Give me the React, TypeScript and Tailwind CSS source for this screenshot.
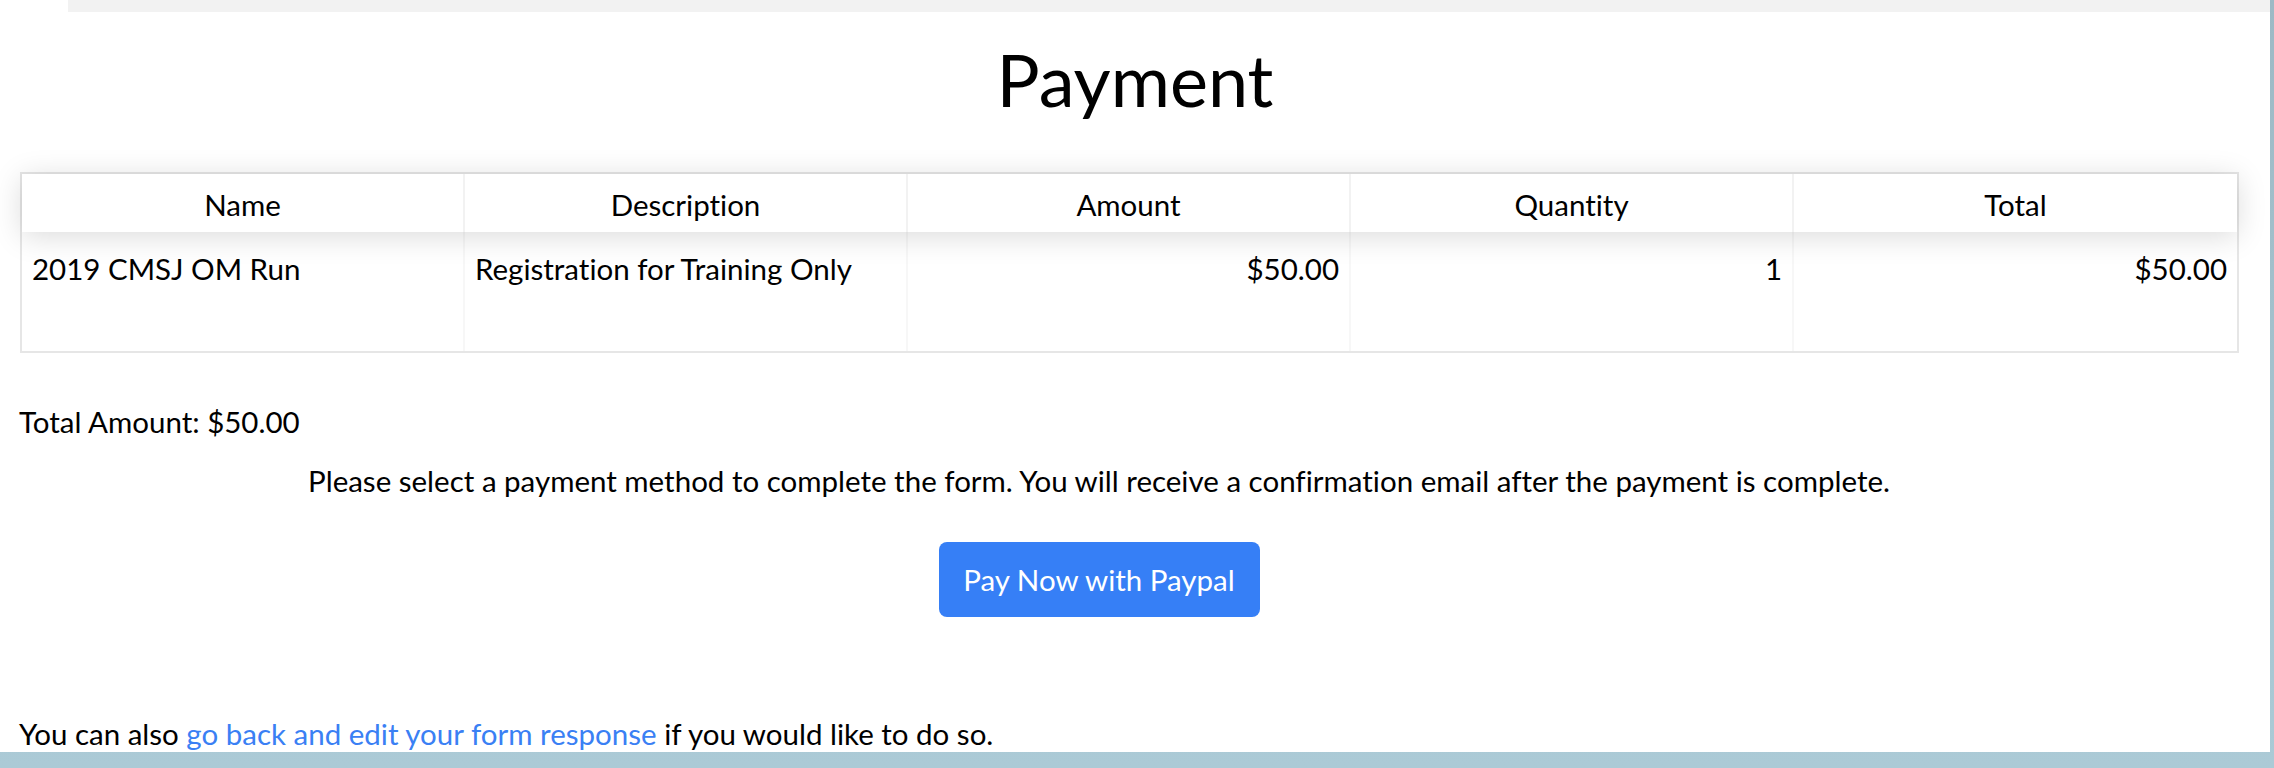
import React from "react";

const rows = [
  {
    name: "2019 CMSJ OM Run",
    description: "Registration for Training Only",
    amount: "$50.00",
    quantity: "1",
    total: "$50.00",
  },
];

const headers = ["Name", "Description", "Amount", "Quantity", "Total"];

export default function App() {
  return (
    <div className="w-[2274px] h-[768px] bg-linear-to-b from-[#9db9c5] to-[#abcad6] font-[Lato,sans-serif] text-black [font-variant-ligatures:none]">
      <div className="w-[2270px] h-[752px] bg-white overflow-hidden flex flex-col">
        {/* top strip */}
        <div className="ml-[68px] h-[12px] bg-[#f2f2f2] shrink-0" />

        <h1 className="mt-[24px] text-center text-[72px] leading-[1.2] font-normal">Payment</h1>

        {/* table */}
        <div className="mt-[50px] ml-[20px] w-[2219px] border-2 border-[#e6e6e6] text-[29.5px] leading-[1.2]">
          <div className="relative z-10 grid grid-cols-5 h-[58px] shadow-[0_4px_30px_0_rgba(0,0,0,0.15)]">
            {headers.map((h, i) => (
              <div
                key={h}
                className={`flex items-center justify-center pt-[2px] ${
                  i < headers.length - 1 ? "border-r-2 border-[#f2f2f2]" : ""
                }`}
              >
                {h}
              </div>
            ))}
          </div>
          {rows.map((r) => (
            <div key={r.name} className="grid grid-cols-5 h-[119px]">
              <div className="pt-[19px] px-[10px] border-r-2 border-[#f7f7f7]">{r.name}</div>
              <div className="pt-[19px] px-[10px] border-r-2 border-[#f7f7f7]">{r.description}</div>
              <div className="pt-[19px] px-[10px] border-r-2 border-[#f7f7f7] text-right">{r.amount}</div>
              <div className="pt-[19px] px-[10px] border-r-2 border-[#f7f7f7] text-right">{r.quantity}</div>
              <div className="pt-[19px] px-[10px] text-right">{r.total}</div>
            </div>
          ))}
        </div>

        <p className="mt-[51px] ml-[19px] text-[29.5px] leading-[1.2]">Total Amount: $50.00</p>

        <div className="mt-[23px] pr-[72px] flex flex-col items-center text-[29.5px] leading-[1.2]">
          <p>
            Please select a payment method to complete the form. You will receive a confirmation email after the payment is complete.
          </p>
          <button className="mt-[44px] w-[321px] h-[75px] rounded-[8px] bg-[#367ff6] text-white">
            Pay Now with Paypal
          </button>
        </div>

        <p className="mt-[99px] ml-[19px] text-[29.5px] leading-[1.2] whitespace-nowrap">
          You can also{" "}
          <a href="#" className="text-[#3a80f4]">
            go back and edit your form response
          </a>{" "}
          if you would like to do so.
        </p>
      </div>
    </div>
  );
}
